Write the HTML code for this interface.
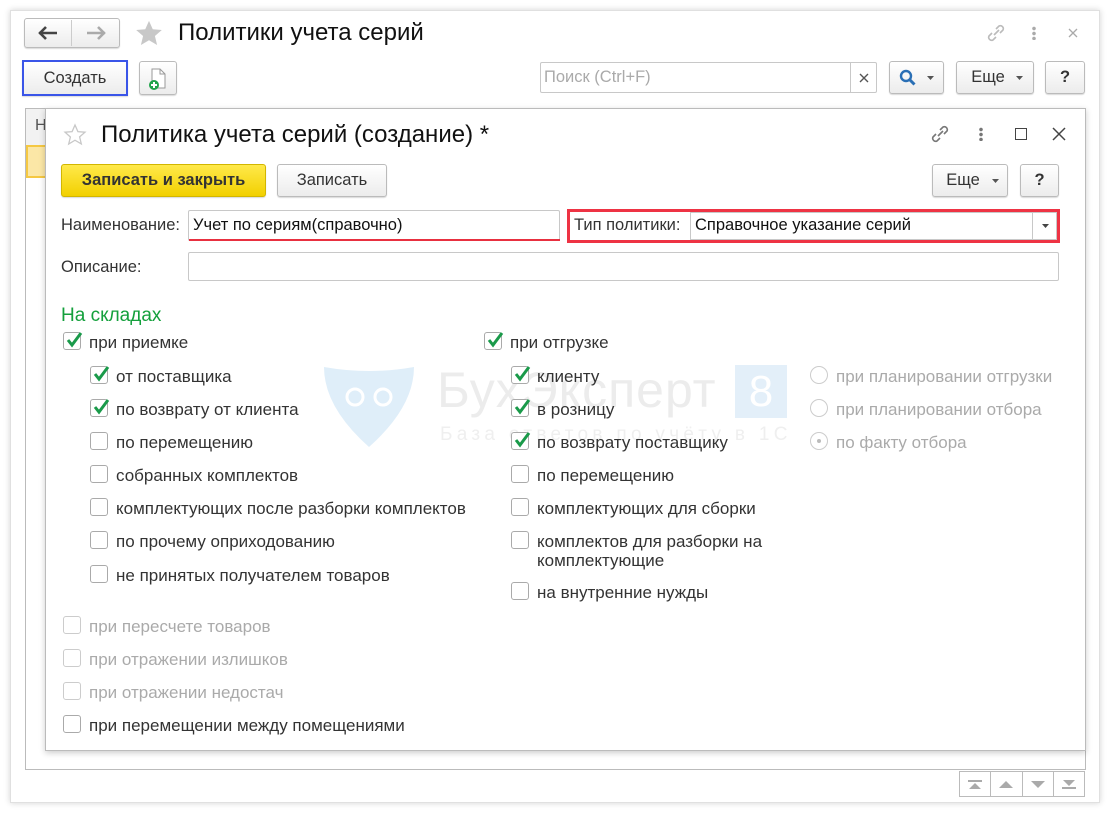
<!DOCTYPE html>
<html><head><meta charset="utf-8"><style>
*{box-sizing:border-box;margin:0;padding:0}
body{width:1110px;height:813px;background:#fff;font-family:"Liberation Sans",Arial,sans-serif;color:#333;position:relative;overflow:hidden}
.a{position:absolute}
.btn{position:absolute;border:1px solid #bbb;border-radius:3px;background:linear-gradient(#fff,#ececec);box-shadow:0 1px 1px rgba(0,0,0,.15);font-size:16.5px;color:#333;text-align:center}
.cb{position:absolute;width:18px;height:18px;border:1px solid #aaa;border-radius:3px;background:#fff}
.cb.d{border-color:#ccc}
.cb svg{position:absolute;left:1px;top:-3px}
.t{position:absolute;font-size:17px;color:#333;white-space:nowrap;line-height:19px;margin-top:1px}
.f{font-size:16.5px}
.t.g{color:#aaa}
.rd{position:absolute;width:18px;height:18px;border:1px solid #ccc;border-radius:50%}
.pg{flex:1;border-right:1px solid #bbb;display:flex;align-items:center;justify-content:center}
</style></head><body>
<div class="a" style="left:10px;top:10px;width:1090px;height:793px;border:1px solid #e0e0e0;box-shadow:0 0 6px rgba(0,0,0,.18);background:#fff"></div>
<div class="btn" style="left:24px;top:18px;width:96px;height:30px;"></div>
<div class="a" style="left:71px;top:20px;width:1px;height:26px;background:#ccc"></div>
<svg class="a" style="left:38px;top:26px" width="20" height="14"><path d="M1 7h18M8 1L2 7l6 6" fill="none" stroke="#444" stroke-width="2.6"/></svg>
<svg class="a" style="left:86px;top:26px" width="20" height="14"><path d="M1 7h18M12 1l6 6-6 6" fill="none" stroke="#aaa" stroke-width="2.6"/></svg>
<svg class="a" style="left:134px;top:19px" width="30" height="29" viewBox="0 0 24 24"><path d="M12 1.5l3.1 7 7.5.6-5.7 5 1.8 7.4L12 17.6l-6.7 3.9 1.8-7.4-5.7-5 7.5-.6z" fill="#c8c8c8"/></svg>
<div class="a" style="left:178px;top:19px;font-size:24px;color:#111">Политики учета серий</div>
<svg class="a" style="left:985px;top:23px" width="22" height="20" viewBox="0 0 22 20" fill="none" stroke="#bbb" stroke-width="1.6"><path d="M9 12l5-5M7 10l-3 3a3 3 0 004 4l3-3M15 10l3-3a3 3 0 00-4-4l-3 3"/></svg>
<div class="a" style="left:1032px;top:26px;width:4px;height:14px;background:radial-gradient(circle,#aaa 1.6px,transparent 2px) 0 0/4px 5px"></div>
<svg class="a" style="left:1068px;top:28px" width="10" height="10"><path d="M1 1l8 8M9 1L1 9" stroke="#aaa" stroke-width="1.3"/></svg>
<div class="btn" style="left:22px;top:60px;width:106px;height:36px;border:2px solid #3a55e8;border-radius:0;line-height:32px">Создать</div>
<div class="btn" style="left:139px;top:61px;width:38px;height:34px"></div>
<svg class="a" style="left:145px;top:66px" width="26" height="26" viewBox="0 0 26 26"><path d="M7 3h8l5 5v14H7z" fill="#fff" stroke="#999"/><path d="M15 3v5h5" fill="none" stroke="#999"/><circle cx="9" cy="19" r="5" fill="#1fa34a"/><path d="M9 16v6M6 19h6" stroke="#fff" stroke-width="2"/></svg>
<div class="a" style="left:540px;top:62px;width:337px;height:31px;border:1px solid #c8c8c8;border-radius:2px;background:#fff"></div>
<div class="a" style="left:850px;top:62px;width:1px;height:31px;background:#c8c8c8"></div>
<div class="a" style="left:544px;top:68px;font-size:16.5px;color:#aaa">Поиск (Ctrl+F)</div>
<svg class="a" style="left:859px;top:73px" width="10" height="10"><path d="M1 1l8 8M9 1L1 9" stroke="#555" stroke-width="1.4"/></svg>
<div class="btn" style="left:889px;top:61px;width:55px;height:33px"></div>
<svg class="a" style="left:899px;top:69px" width="18" height="18" viewBox="0 0 18 18"><circle cx="7" cy="7" r="5" fill="none" stroke="#2a6fb5" stroke-width="2.4"/><path d="M10.5 10.5l5 5" stroke="#2a6fb5" stroke-width="3"/></svg>
<svg class="a" style="left:927px;top:76px" width="7" height="4"><path d="M0 0h7L3.5 4z" fill="#555"/></svg>
<div class="btn" style="left:956px;top:61px;width:78px;height:33px;line-height:31px;padding-right:14px">Еще</div>
<svg class="a" style="left:1016px;top:76px" width="7" height="4"><path d="M0 0h7L3.5 4z" fill="#555"/></svg>
<div class="btn" style="left:1045px;top:61px;width:40px;height:33px;line-height:31px;font-weight:bold">?</div>
<div class="a" style="left:25px;top:108px;width:1061px;height:662px;border:1px solid #bbb"></div>
<div class="a" style="left:26px;top:109px;width:20px;height:36px;background:#f2f2f2;font-size:16px;padding:8px 0 0 9px;color:#555">Н</div>
<div class="a" style="left:26px;top:145px;width:20px;height:33px;background:#fbe7a6;border:2px solid #f5c842;border-right:none"></div>
<div class="a" style="left:959px;top:771px;width:126px;height:26px;border:1px solid #bbb;display:flex">
<div class="pg"><svg width="14" height="9"><path d="M0 0h14v2H0zM7 3l6 6H1z" fill="#aaa"/></svg></div>
<div class="pg"><svg width="14" height="7"><path d="M7 0l7 7H0z" fill="#aaa"/></svg></div>
<div class="pg"><svg width="14" height="7"><path d="M0 0h14L7 7z" fill="#aaa"/></svg></div>
<div class="pg" style="border:none"><svg width="14" height="9"><path d="M1 0h12L7 6zM0 7h14v2H0z" fill="#aaa"/></svg></div></div>
<div class="a" style="left:45px;top:108px;width:1041px;height:643px;border:1px solid #bbb;background:#fff;box-shadow:0 2px 6px rgba(0,0,0,.2)"></div>
<svg class="a" style="left:63px;top:123px" width="24" height="24" viewBox="0 0 24 24"><path d="M12 2l2.9 6.6 7.1.6-5.4 4.7 1.7 7L12 17.2 5.7 21l1.7-7L2 9.2l7.1-.6z" fill="none" stroke="#c8c8c8" stroke-width="1.3"/></svg>
<div class="a" style="left:101px;top:121px;font-size:24px;color:#111">Политика учета серий (создание) *</div>
<svg class="a" style="left:929px;top:124px" width="22" height="20" viewBox="0 0 22 20" fill="none" stroke="#777" stroke-width="1.6"><path d="M9 12l5-5M7 10l-3 3a3 3 0 004 4l3-3M15 10l3-3a3 3 0 00-4-4l-3 3"/></svg>
<div class="a" style="left:979px;top:127px;width:4px;height:14px;background:radial-gradient(circle,#777 1.6px,transparent 2px) 0 0/4px 5px"></div>
<div class="a" style="left:1015px;top:128px;width:12px;height:12px;border:1.5px solid #444"></div>
<svg class="a" style="left:1052px;top:127px" width="14" height="14"><path d="M1 1l12 12M13 1L1 13" stroke="#444" stroke-width="1.5"/></svg>
<div class="btn" style="left:61px;top:164px;width:205px;height:33px;background:linear-gradient(#ffe94a,#f2d000);border-color:#d2b600;font-weight:bold;line-height:31px;color:#333;font-size:16.5px">Записать и закрыть</div>
<div class="btn" style="left:277px;top:164px;width:110px;height:33px;line-height:31px">Записать</div>
<div class="btn" style="left:932px;top:164px;width:76px;height:33px;line-height:31px;padding-right:14px">Еще</div>
<svg class="a" style="left:992px;top:179px" width="7" height="4"><path d="M0 0h7L3.5 4z" fill="#555"/></svg>
<div class="btn" style="left:1020px;top:164px;width:39px;height:33px;line-height:31px;font-weight:bold">?</div>
<div class="t f" style="left:61px;top:215px">Наименование:</div>
<div class="a" style="left:188px;top:210px;width:372px;height:31px;border:1px solid #c8c8c8;border-radius:2px"></div>
<div class="a" style="left:189px;top:239px;width:371px;height:2px;background:#e83040"></div>
<div class="t f" style="left:193px;top:215px;color:#111">Учет по сериям(справочно)</div>
<div class="a" style="left:567px;top:209px;width:493px;height:34px;border:3px solid #ee3344"></div>
<div class="t f" style="left:574px;top:215px">Тип политики:</div>
<div class="a" style="left:690px;top:212px;width:367px;height:28px;border:1px solid #c8c8c8"></div>
<div class="a" style="left:1032px;top:212px;width:1px;height:28px;background:#c8c8c8"></div>
<svg class="a" style="left:1042px;top:224px" width="7" height="4"><path d="M0 0h7L3.5 4z" fill="#444"/></svg>
<div class="t f" style="left:695px;top:215px;color:#111">Справочное указание серий</div>
<div class="t f" style="left:61px;top:257px">Описание:</div>
<div class="a" style="left:188px;top:252px;width:871px;height:29px;border:1px solid #c8c8c8;border-radius:2px"></div>
<div class="a" style="left:61px;top:305px;font-size:19px;color:#14a03c">На складах</div>
<svg class="a" style="left:322px;top:365px" width="94" height="83" viewBox="0 0 94 83"><path d="M2 2q45 8 90 0 0 40-45 80Q2 42 2 2z" fill="#dfeef9"/><circle cx="33" cy="32" r="8" fill="none" stroke="#fff" stroke-width="3"/><circle cx="61" cy="32" r="8" fill="none" stroke="#fff" stroke-width="3"/></svg>
<div class="a" style="left:437px;top:361px;font-size:50px;color:#ececec;letter-spacing:1px">БухЭксперт</div>
<div class="a" style="left:735px;top:365px;width:52px;height:53px;background:#e3eff9;color:#fff;font-size:44px;text-align:center;line-height:53px">8</div>
<div class="a" style="left:440px;top:424px;font-size:19px;color:#efefef;letter-spacing:4.3px">База ответов по учёту в 1С</div>

<div class="cb" style="left:63px;top:332px"><svg width="20" height="20" viewBox="0 0 20 20"><path d="M3 10l4 5 9-12" fill="none" stroke="#1a9a4a" stroke-width="3"/></svg></div><div class="t" style="left:89px;top:332px">при приемке</div>
<div class="cb" style="left:90px;top:366px"><svg width="20" height="20" viewBox="0 0 20 20"><path d="M3 10l4 5 9-12" fill="none" stroke="#1a9a4a" stroke-width="3"/></svg></div><div class="t" style="left:116px;top:366px">от поставщика</div>
<div class="cb" style="left:90px;top:399px"><svg width="20" height="20" viewBox="0 0 20 20"><path d="M3 10l4 5 9-12" fill="none" stroke="#1a9a4a" stroke-width="3"/></svg></div><div class="t" style="left:116px;top:399px">по возврату от клиента</div>
<div class="cb" style="left:90px;top:432px"></div><div class="t" style="left:116px;top:432px">по перемещению</div>
<div class="cb" style="left:90px;top:465px"></div><div class="t" style="left:116px;top:465px">собранных комплектов</div>
<div class="cb" style="left:90px;top:498px"></div><div class="t" style="left:116px;top:498px">комплектующих после разборки комплектов</div>
<div class="cb" style="left:90px;top:531px"></div><div class="t" style="left:116px;top:531px">по прочему оприходованию</div>
<div class="cb" style="left:90px;top:565px"></div><div class="t" style="left:116px;top:565px">не принятых получателем товаров</div>

<div class="cb" style="left:484px;top:332px"><svg width="20" height="20" viewBox="0 0 20 20"><path d="M3 10l4 5 9-12" fill="none" stroke="#1a9a4a" stroke-width="3"/></svg></div><div class="t" style="left:510px;top:332px">при отгрузке</div>
<div class="cb" style="left:511px;top:366px"><svg width="20" height="20" viewBox="0 0 20 20"><path d="M3 10l4 5 9-12" fill="none" stroke="#1a9a4a" stroke-width="3"/></svg></div><div class="t" style="left:537px;top:366px">клиенту</div>
<div class="cb" style="left:511px;top:399px"><svg width="20" height="20" viewBox="0 0 20 20"><path d="M3 10l4 5 9-12" fill="none" stroke="#1a9a4a" stroke-width="3"/></svg></div><div class="t" style="left:537px;top:399px">в розницу</div>
<div class="cb" style="left:511px;top:432px"><svg width="20" height="20" viewBox="0 0 20 20"><path d="M3 10l4 5 9-12" fill="none" stroke="#1a9a4a" stroke-width="3"/></svg></div><div class="t" style="left:537px;top:432px">по возврату поставщику</div>
<div class="cb" style="left:511px;top:465px"></div><div class="t" style="left:537px;top:465px">по перемещению</div>
<div class="cb" style="left:511px;top:498px"></div><div class="t" style="left:537px;top:498px">комплектующих для сборки</div>
<div class="cb" style="left:511px;top:531px"></div><div class="t" style="left:537px;top:531px">комплектов для разборки на<br>комплектующие</div>
<div class="cb" style="left:511px;top:582px"></div><div class="t" style="left:537px;top:582px">на внутренние нужды</div>

<div class="rd" style="left:810px;top:366px"></div><div class="t g" style="left:836px;top:366px">при планировании отгрузки</div>
<div class="rd" style="left:810px;top:399px"></div><div class="t g" style="left:836px;top:399px">при планировании отбора</div>
<div class="rd" style="left:810px;top:432px"><div style="position:absolute;left:6px;top:6px;width:4px;height:4px;border-radius:50%;background:#bbb"></div></div><div class="t g" style="left:836px;top:432px">по факту отбора</div>

<div class="cb d" style="left:63px;top:616px"></div><div class="t g" style="left:89px;top:616px">при пересчете товаров</div>
<div class="cb d" style="left:63px;top:649px"></div><div class="t g" style="left:89px;top:649px">при отражении излишков</div>
<div class="cb d" style="left:63px;top:682px"></div><div class="t g" style="left:89px;top:682px">при отражении недостач</div>
<div class="cb" style="left:63px;top:715px"></div><div class="t" style="left:89px;top:715px">при перемещении между помещениями</div>
</body></html>
